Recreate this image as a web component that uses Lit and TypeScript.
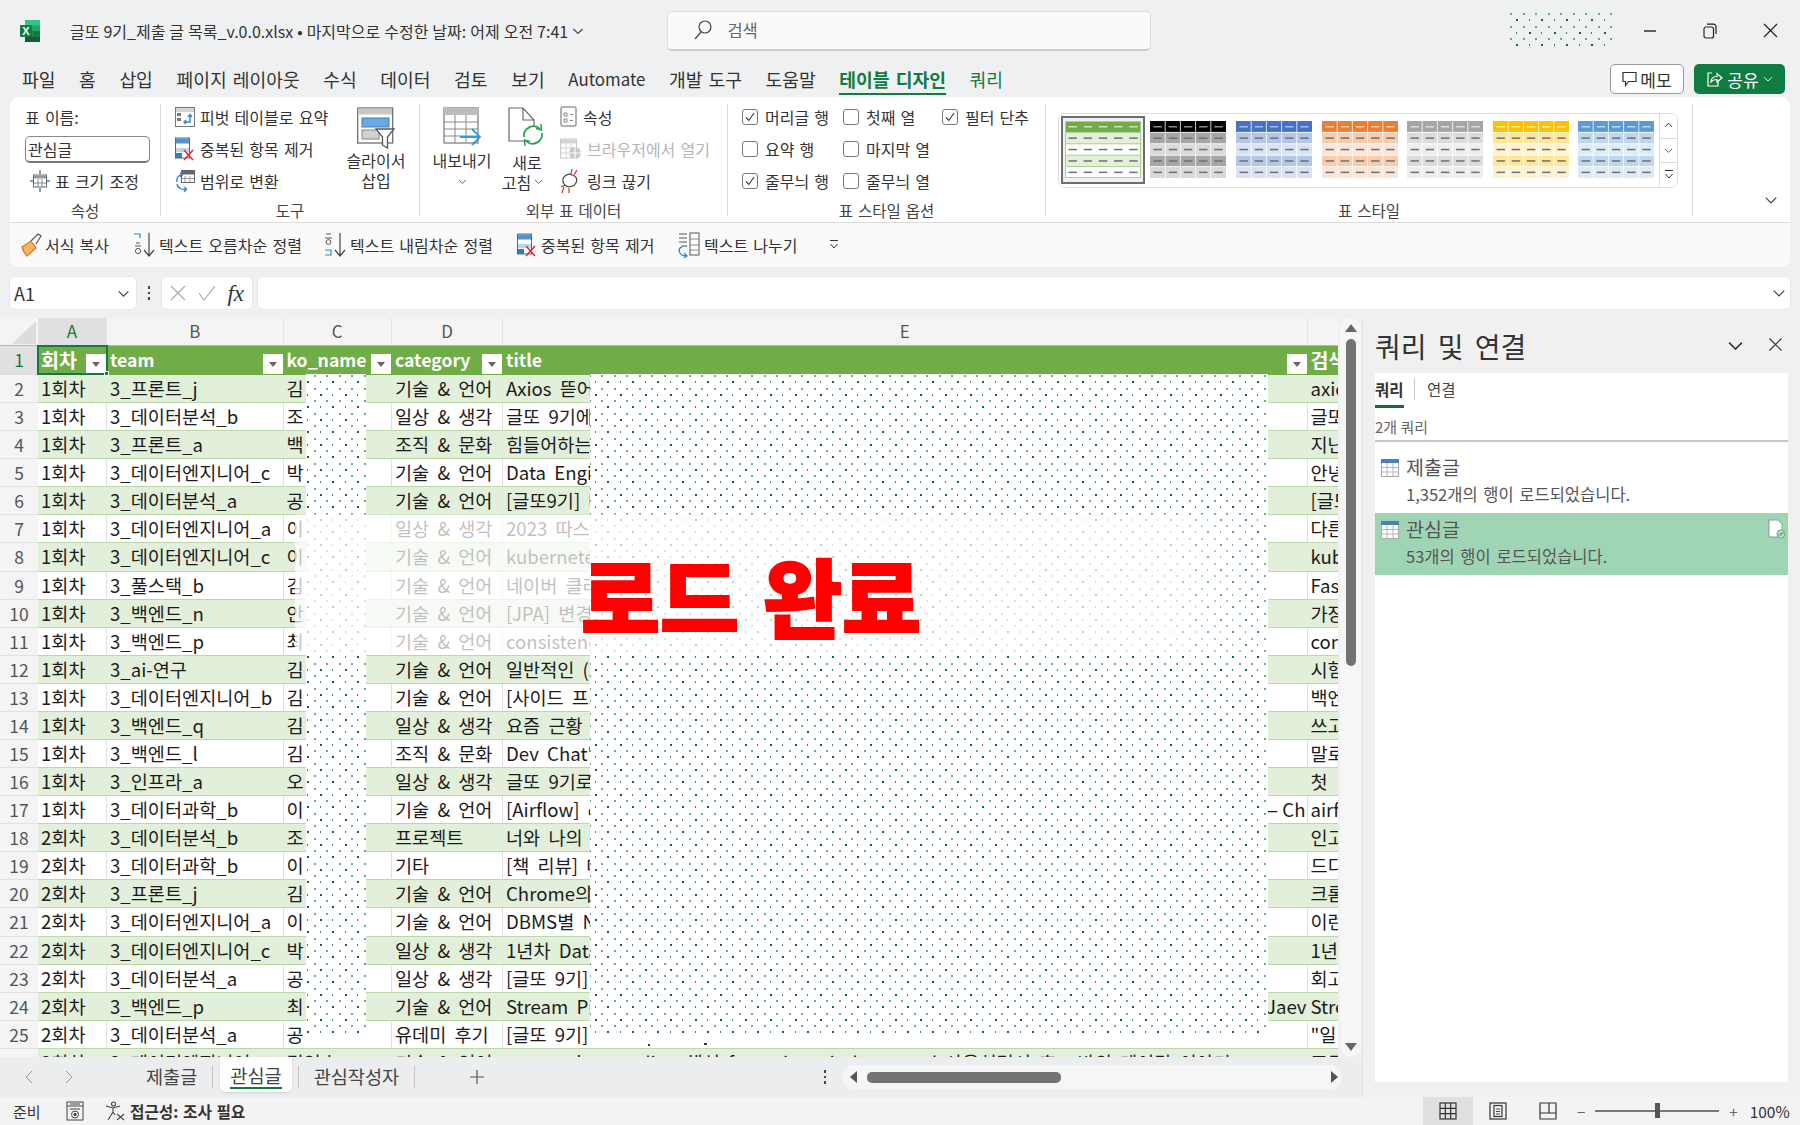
import { LitElement, html, css, svg } from "lit";
import { customElement } from "lit/decorators.js";

const ROWS: string[][] = [
  ["1회차","3_프론트_j","김","기술 & 언어","Axios 뜯어보기 이야기","axios"],
  ["1회차","3_데이터분석_b","조","일상 & 생각","글또 9기에 참여하며","글또"],
  ["1회차","3_프론트_a","백","조직 & 문화","힘들어하는 동료에게","지난"],
  ["1회차","3_데이터엔지니어_c","박","기술 & 언어","Data Engineering","안녕"],
  ["1회차","3_데이터분석_a","공","기술 & 언어","[글또9기] 데이터","[글또"],
  ["1회차","3_데이터엔지니어_a","이","일상 & 생각","2023 따스한 회고","다른"],
  ["1회차","3_데이터엔지니어_c","이","기술 & 언어","kubernetes 시작","kub"],
  ["1회차","3_풀스택_b","김","기술 & 언어","네이버 클라우드","Fast"],
  ["1회차","3_백엔드_n","안","기술 & 언어","[JPA] 변경 감지","가장"],
  ["1회차","3_백엔드_p","최","기술 & 언어","consistency 이야기","con"],
  ["1회차","3_ai-연구","김","기술 & 언어","일반적인 (그리고","시험"],
  ["1회차","3_데이터엔지니어_b","김","기술 & 언어","[사이드 프로젝트]","백엔"],
  ["1회차","3_백엔드_q","김","일상 & 생각","요즘 근황 이야기","쓰고"],
  ["1회차","3_백엔드_l","김","조직 & 문화","Dev Chat\" 후기","말로"],
  ["1회차","3_인프라_a","오","일상 & 생각","글또 9기로 시작","첫 ·"],
  ["1회차","3_데이터과학_b","이","기술 & 언어","[Airflow] dag","airfl"],
  ["2회차","3_데이터분석_b","조","프로젝트","너와 나의 이야기","인고"],
  ["2회차","3_데이터과학_b","이","기타","[책 리뷰] 데이터","드디"],
  ["2회차","3_프론트_j","김","기술 & 언어","Chrome의 렌더링","크롬"],
  ["2회차","3_데이터엔지니어_a","이","기술 & 언어","DBMS별 NULL","이런"],
  ["2회차","3_데이터엔지니어_c","박","일상 & 생각","1년차 Data 회고","1년"],
  ["2회차","3_데이터분석_a","공","일상 & 생각","[글또 9기] 회고","회고"],
  ["2회차","3_백엔드_p","최","기술 & 언어","Stream Processing","Stre"],
  ["2회차","3_데이터분석_a","공","유데미 후기","[글또 9기] 유데미","\"일"],
  ["2회차","3_데이터엔지니어_a","김영호","기술 & 언어","query plan reading 해석 for unique indexes and 사용설명서 후 : 바의 메이킹 이야기","프로"],
];

const THEMES = [
  { head:"#70ad47", a:"#e2efda", b:"#ffffff", line:"#a9d08e", dashHead:"#cfe3bf" },
  { head:"#000000", a:"#a6a6a6", b:"#d9d9d9", line:"#ffffff", dashHead:"#8a8a8a" },
  { head:"#4472c4", a:"#b4c6e7", b:"#d9e1f2", line:"#ffffff", dashHead:"#a9bde4" },
  { head:"#ed7d31", a:"#f8cbad", b:"#fce4d6", line:"#ffffff", dashHead:"#f8c9a8" },
  { head:"#a5a5a5", a:"#dbdbdb", b:"#ededed", line:"#ffffff", dashHead:"#dedede" },
  { head:"#ffc000", a:"#ffe699", b:"#fff2cc", line:"#ffffff", dashHead:"#ffe8a0" },
  { head:"#5b9bd5", a:"#bdd7ee", b:"#ddebf7", line:"#ffffff", dashHead:"#bcd6ee" },
];

function thumb(t: typeof THEMES[number], green: boolean) {
  const rowsY = [0, 11.4, 22.8, 34.2, 45.6];
  const fills = [t.head, t.a, t.b, t.a, t.b];
  return html`<svg width="76" height="57" viewBox="0 0 76 57">
    ${rowsY.map((y, i) => svg`<rect x="0" y=${y} width="76" height="11.4" fill=${fills[i]}></rect>`)}
    ${green
      ? svg`<rect x=".5" y=".5" width="75" height="56" fill="none" stroke=${t.line}></rect>
            ${rowsY.slice(1).map(y => svg`<line x1="0" x2="76" y1=${y} y2=${y} stroke=${t.line}></line>`)}`
      : [15.2, 30.4, 45.6, 60.8].map(x => svg`<line x1=${x} x2=${x} y1="0" y2="57" stroke=${t.line} stroke-width=".8"></line>`)}
    ${!green ? rowsY.slice(1).map(y => svg`<line x1="0" x2="76" y1=${y} y2=${y} stroke="#fff" stroke-width=".8"></line>`) : ""}
    ${rowsY.map((y, i) => [0,1,2,3,4].map(c => svg`<rect x=${3.5 + c * 15.2} y=${y + 5} width="8.4" height="1.5" fill=${i === 0 ? t.dashHead : "#707070"}></rect>`))}
  </svg>`;
}

const dotPattern = (id: string, tx: number, ty: number) => svg`
  <pattern id=${id} patternUnits="userSpaceOnUse" width="25" height="25" patternTransform="translate(${tx},${ty})">
    <rect x="0" y="0" width="2" height="2" fill="#6aa98a"></rect>
    <rect x="13" y="0" width="2" height="2" fill="#6aa98a"></rect>
    <rect x="6" y="6" width="2" height="2" fill="#0e6a3a"></rect>
    <rect x="19" y="6" width="1" height="2" fill="#3f8a63"></rect>
    <rect x="0" y="13" width="2" height="2" fill="#6aa98a"></rect>
    <rect x="13" y="13" width="2" height="2" fill="#6aa98a"></rect>
    <rect x="6" y="19" width="1" height="2" fill="#3f8a63"></rect>
    <rect x="19" y="19" width="2" height="2" fill="#0e6a3a"></rect>
  </pattern>`;

const I = {
  excel: html`<svg width="22" height="24" viewBox="0 0 22 24"><rect x="6" y="1" width="15" height="22" rx="1.5" fill="#21a366"></rect><rect x="6" y="1" width="15" height="5.5" fill="#33c481"></rect><rect x="13.5" y="12" width="7.5" height="5.5" fill="#107c41"></rect><rect x="6" y="17.5" width="15" height="5.5" fill="#185c37"></rect><rect x="1" y="6" width="12" height="12" rx="1" fill="#107c41"></rect><text x="7" y="15.5" text-anchor="middle" font-size="11" font-weight="700" font-family="Liberation Sans" fill="#fff">X</text></svg>`,
  search: html`<svg width="20" height="22" viewBox="0 0 20 22" fill="none" stroke="#444" stroke-width="1.2"><circle cx="12" cy="8" r="6"></circle><path d="M8 13 L2 20"></path></svg>`,
  min: html`<svg width="14" height="4" viewBox="0 0 14 4"><path d="M1 2H13" stroke="#222" stroke-width="1.4"></path></svg>`,
  restore: html`<svg width="14" height="16" viewBox="0 0 14 16" fill="none" stroke="#222" stroke-width="1.2"><rect x="1" y="4" width="9.5" height="11" rx="2"></rect><path d="M4 1.2H10.5A2.5 2.5 0 0 1 13 3.7V11"></path></svg>`,
  close: html`<svg width="15" height="15" viewBox="0 0 15 15"><path d="M1 1L14 14M14 1L1 14" stroke="#222" stroke-width="1.2"></path></svg>`,
  bubble: html`<svg width="15" height="16" viewBox="0 0 15 16" fill="none" stroke="#333" stroke-width="1.2"><path d="M1 1.5H14V10.5H6.5L3.5 14.5V10.5H1Z"></path></svg>`,
  share: html`<svg width="17" height="17" viewBox="0 0 17 17" fill="none" stroke="#fff" stroke-width="1.2"><path d="M6 2H2V15H12V10"></path><path d="M5 11C5 7 8 5.5 11 5.5V2.5L16 7L11 11V8.5C8.5 8.5 6.5 9 5 11Z"></path></svg>`,
  pivot: html`<svg width="20" height="22" viewBox="0 0 20 22"><rect x=".5" y="1.5" width="19" height="19" fill="#fff" stroke="#777"></rect><rect x="1" y="2" width="18" height="4" fill="#d5d5d5"></rect><rect x="2" y="7" width="4" height="3" fill="#777"></rect><rect x="2" y="12" width="4" height="3" fill="#777"></rect><path d="M9 16H15V9M13 11L15 8.5L17 11M11 14L9 16L11 18" fill="none" stroke="#2e86c9" stroke-width="1.4"></path></svg>`,
  dup: html`<svg width="20" height="24" viewBox="0 0 20 24"><rect x=".5" y="1" width="14" height="20" fill="#fff" stroke="#666"></rect><rect x="1" y="1.5" width="13" height="5" fill="#4f93d1"></rect><rect x="1" y="11" width="13" height="4" fill="#b9d6ef"></rect><rect x="1" y="16" width="6" height="5" fill="#2f7dc1"></rect><path d="M9 13L18 23M18 13L9 23" stroke="#e5252a" stroke-width="1.5"></path></svg>`,
  convert: html`<svg width="20" height="24" viewBox="0 0 20 24" fill="none"><rect x="6.5" y="1.5" width="13" height="12" fill="#fff" stroke="#666"></rect><rect x="7" y="2" width="12" height="3.5" fill="#666"></rect><path d="M10 7V13M15 7V13M7 9.5H19" stroke="#999"></path><path d="M2 13C1 8 4 6 7 6M5 4L7.5 6L5 8M2 15C3 20 8 21 11 20M9 18L11.5 20L9 23" stroke="#2e86c9" stroke-width="1.3"></path></svg>`,
  resize: html`<svg width="20" height="24" viewBox="0 0 20 24" fill="none"><rect x="3.5" y="6" width="13" height="12" fill="#fff" stroke="#666"></rect><rect x="4" y="6.5" width="12" height="3" fill="#999"></rect><path d="M8 10V18M12 10V18M4 14H16" stroke="#888"></path><path d="M10 1V5M10 19V23M0 12H3M17 12H20" stroke="#2e86c9" stroke-width="1.4"></path></svg>`,
  slicer: html`<svg width="38" height="42" viewBox="0 0 38 42"><rect x=".7" y="1" width="35" height="35" fill="#fff" stroke="#666" stroke-width="1.2"></rect><rect x="1" y="1.5" width="34" height="6" fill="#c8c8c8"></rect><rect x="5" y="11" width="27" height="9" fill="#6ba8e0" stroke="#3c7fbf"></rect><rect x="5" y="23" width="17" height="9" fill="#d2d2d2" stroke="#888"></rect><path d="M19 22H37L30.5 30V41L25.5 38V30Z" fill="#fff" stroke="#555" stroke-width="1.3"></path></svg>`,
  exportT: html`<svg width="40" height="42" viewBox="0 0 40 42" fill="none"><rect x="2" y="1" width="34" height="35" fill="#fff" stroke="#777" stroke-width="1.2"></rect><rect x="2" y="1" width="34" height="7" fill="#bdbdbd"></rect><path d="M2 15H36M2 22H36M2 29H36M13 8V36M24 8V36" stroke="#888"></path><path d="M18 30H38M30 22L38 30L30 38" stroke="#2e9ce0" stroke-width="1.8"></path></svg>`,
  refresh: html`<svg width="40" height="44" viewBox="0 0 40 44" fill="none"><path d="M2 1H16L27 13V34H2Z" fill="#fff" stroke="#666" stroke-width="1.2"></path><path d="M16 1V13H27" stroke="#666" stroke-width="1.2"></path><circle cx="26" cy="28" r="9.5" fill="#fff"></circle><path d="M17 30A9.5 9.5 0 0 1 33 22M35 26A9.5 9.5 0 0 1 19 34" stroke="#22a355" stroke-width="1.7"></path><path d="M29 21.5L34.5 23L34 17M23 34.5L17.5 33L18 39" stroke="#22a355" stroke-width="1.5"></path></svg>`,
  props: html`<svg width="18" height="22" viewBox="0 0 18 22" fill="none"><rect x="1" y="1" width="15" height="19" rx="1" stroke="#666" fill="#fff"></rect><path d="M4 7H7V10H4ZM4 13H7V16H4Z" stroke="#888"></path><path d="M10 8.5H13M10 14.5H13" stroke="#888"></path></svg>`,
  browser: html`<svg width="22" height="22" viewBox="0 0 22 22"><rect x=".5" y="1" width="16" height="19" fill="#fff" stroke="#c8c8c8"></rect><rect x="1" y="1.5" width="15" height="4" fill="#d4d4d4"></rect><path d="M6 6V20M11 6V20M1 10H16M1 15H16" stroke="#d4d4d4"></path><circle cx="15" cy="15" r="6" fill="#c8c8c8"></circle><path d="M9 15H21M15 9V21" stroke="#fff"></path></svg>`,
  unlink: html`<svg width="22" height="26" viewBox="0 0 22 26" fill="none"><path d="M5 8C9 5 12 7 12 7C16 8 18 11 16 15C14 19 8 20 5 17C2 14 2 10 5 8Z" stroke="#444" stroke-width="1.2" fill="#fff"></path><path d="M12 1L11 6M17 2L14 7M2 25L4 19M9 25L9 20M1 19L5 17" stroke="#e5252a" stroke-width="1.2"></path></svg>`,
  painter: html`<svg width="22" height="24" viewBox="0 0 22 24" fill="none"><path d="M2 14L11 8L16 15L7 23C5 21 3 18 2 14Z" fill="#f7b267" stroke="#d9791a" stroke-width="1.2"></path><path d="M11 8L18 1L21 3L16 11" fill="#fff" stroke="#555" stroke-width="1.2"></path></svg>`,
  sortAsc: html`<svg width="24" height="26" viewBox="0 0 24 26" fill="none"><path d="M2 2H8V6" stroke="#2e86c9" stroke-width="1.2"></path><path d="M4 11H8" stroke="#555"></path><circle cx="6" cy="19" r="2.6" stroke="#555"></circle><path d="M3 14H9" stroke="#555"></path><path d="M17 1V24M12 18L17 24L22 18" stroke="#444" stroke-width="1.2"></path></svg>`,
  sortDesc: html`<svg width="24" height="26" viewBox="0 0 24 26" fill="none"><path d="M3 2H8M2 6H9" stroke="#555"></path><circle cx="5.5" cy="10" r="2.4" stroke="#555"></circle><path d="M2 18H8V23H2" stroke="#2e86c9" stroke-width="1.2"></path><path d="M17 1V24M12 18L17 24L22 18" stroke="#444" stroke-width="1.2"></path></svg>`,
  split: html`<svg width="24" height="26" viewBox="0 0 24 26" fill="none"><path d="M2 2H10M2 6H10M2 10H10" stroke="#555"></path><rect x="13" y="1" width="9" height="22" stroke="#555" fill="#fff"></rect><path d="M13 7H22M13 13H22M13 18H22" stroke="#888"></path><path d="M10 14C3 13 1 18 3 21C4 23 7 24 10 24M7 21L10 24L7 26" stroke="#2e86c9" stroke-width="1.3"></path></svg>`,
  more: html`<svg width="12" height="12" viewBox="0 0 12 12" fill="none" stroke="#333"><path d="M2 1.5H10M2.5 5L6 9L9.5 5"></path></svg>`,
  tbl: html`<svg width="18" height="18" viewBox="0 0 18 18"><rect x=".5" y=".5" width="17" height="17" fill="#fff" stroke="#a8a8a8"></rect><rect x="0" y="0" width="18" height="4" fill="#4a7fc1"></rect><path d="M6 4V18M12 4V18M0 8.5H18M0 13H18" stroke="#b5b5b5"></path></svg>`,
  fileRef: html`<svg width="18" height="20" viewBox="0 0 18 20"><path d="M1 1H10L14 5V18H1Z" fill="#fff" stroke="#8a9a90"></path><circle cx="13" cy="15" r="4.5" fill="#7ab795"></circle><path d="M10.5 15A2.5 2.5 0 0 1 15 13.5M15.5 15A2.5 2.5 0 0 1 11 16.5" stroke="#fff" fill="none"></path></svg>`,
  macro: html`<svg width="18" height="20" viewBox="0 0 18 20" fill="none" stroke="#444"><rect x="1" y="1" width="16" height="18"></rect><path d="M1 5H17M4 8H14M4 3H14"></path><circle cx="9" cy="13.5" r="3.5"></circle><circle cx="9" cy="13.5" r="1.2" fill="#444"></circle></svg>`,
  access: html`<svg width="20" height="20" viewBox="0 0 20 20" fill="none" stroke="#444" stroke-width="1.1"><circle cx="8.5" cy="3" r="2"></circle><path d="M1 5L8 7L15 5M8 7V11L3 19M8 11L10 14"></path><path d="M12 13L19 19M19 13L12 19" stroke="#444"></path></svg>`,
  vNormal: html`<svg width="18" height="18" viewBox="0 0 18 18" fill="none" stroke="#333" stroke-width="1.2"><rect x="1" y="1" width="16" height="16"></rect><path d="M6.3 1V17M11.7 1V17M1 6.3H17M1 11.7H17"></path></svg>`,
  vPage: html`<svg width="18" height="18" viewBox="0 0 18 18" fill="none" stroke="#333" stroke-width="1.2"><rect x="1" y="1" width="16" height="16"></rect><rect x="5" y="3.5" width="8" height="11"></rect><path d="M7 7H11M7 9.5H11M7 12H11" stroke-width=".9"></path></svg>`,
  vBreak: html`<svg width="18" height="18" viewBox="0 0 18 18" fill="none" stroke="#333" stroke-width="1.2"><path d="M1 1H17V17H1ZM10 1V11H17M10 11H1" ></path></svg>`,
};

const chev = (w = 12, color = "#444") => html`<svg width=${w} height=${w} viewBox="0 0 12 12" fill="none" stroke=${color} stroke-width="1.1"><path d="M1.5 4L6 8.5L10.5 4"></path></svg>`;

@customElement("app-root")
export class AppRoot extends LitElement {
  static styles = css`
    :host { display: block; width: 1800px; height: 1125px; overflow: hidden; background: #eef0f1; color: #222;
      font-family: "Noto Sans CJK KR", "Liberation Sans", sans-serif; font-size: 16px; }
    .app { display: flex; flex-direction: column; height: 1125px; }
    svg { display: block; flex: none; }

    /* title bar */
    .title { height: 61px; display: flex; align-items: center; flex: none; }
    .logo { margin-left: 19px; width: 51px; }
    .ttext { width: 598px; display: flex; align-items: center; gap: 4px; font-size: 16px; word-spacing: .4px; color: #333; white-space: nowrap; }
    .search { width: 484px; height: 40px; background: #fafafa; border: 1px solid #dedede; border-bottom: 2px solid #ccc; border-radius: 5px;
      box-sizing: border-box; display: flex; align-items: center; gap: 14px; padding-left: 25px; color: #666; font-size: 16.5px; }
    .dotsT { margin-left: 356px; }
    .wc { display: flex; margin-left: 5px; }
    .wc div { width: 60px; display: flex; justify-content: center; align-items: center; height: 40px; }

    /* ribbon tabs */
    .tabs { height: 36px; display: flex; align-items: center; flex: none; padding-left: 22px; gap: 23.6px; font-size: 18.2px; word-spacing: 2px; color: #333; white-space: nowrap; }
    .tab { height: 36px; line-height: 36px; position: relative; }
    .tab.lat { font-size: 16.9px; }
    .tab.on { color: #107c41; font-weight: 700; }
    .tab.on::after { content: ""; position: absolute; left: 0; right: 0; bottom: 2px; height: 2.5px; background: #107c41; }
    .tab.q { color: #107c41; }
    .tab.spacer { flex: 1; }
    .memo { width: 74px; height: 30px; box-sizing: border-box; border: 1px solid #999; border-radius: 5px; background: #fff; display: flex; align-items: center; justify-content: center; gap: 3px; font-size: 17px; margin-right: -13.6px; }
    .sharebtn { width: 91px; height: 30px; box-sizing: border-box; border-radius: 5px; background: #107c41; color: #fff; display: flex; align-items: center; justify-content: center; gap: 4px; font-size: 17px; margin-right: 15px; }

    /* ribbon */
    .ribbon { margin: 0 10px; width: 1780px; height: 170px; flex: none; background: #fff; border-radius: 9px; overflow: hidden; box-sizing: border-box; }
    .rtop { display: flex; height: 126px; padding-top: 4px; box-sizing: border-box; border-bottom: 1.5px solid #dcdcdc; font-size: 16px; word-spacing: 1.6px; color: #333; }
    .vsep { width: 1px; height: 112px; margin-top: 3px; background: #d9d9d9; flex: none; }
    .group { display: flex; flex-direction: column; flex: none; }
    .gbody { height: 97px; display: flex; }
    .glabel { height: 24px; line-height: 24px; text-align: center; font-size: 15.5px; color: #444; }
    .g1 { width: 150px; } .g2 { width: 258px; } .g3 { width: 307px; } .g4 { width: 317px; } .g5 { width: 646px; } .g6 { flex: 1; position: relative; }
    .col { display: flex; flex-direction: column; }
    .r { height: 32px; display: flex; align-items: center; gap: 5px; white-space: nowrap; }
    .g1 .col { padding-left: 15px; }
    .namein { width: 125px; height: 27px; box-sizing: border-box; border: 1px solid #888; border-bottom: 2px solid #777; border-radius: 5px; padding-left: 2px; font-size: 16px; line-height: 24px; }
    .pad5 { padding-left: 5px; }
    .g2col { width: 180px; padding-left: 14px; box-sizing: border-box; }
    .big { display: flex; flex-direction: column; align-items: center; padding-top: 6px; line-height: 20px; white-space: nowrap; box-sizing: border-box; }
    .big svg { margin-bottom: 1px; }
    .bslicer { width: 70px; } .bexport { width: 84px; } .brefresh { width: 46px; }
    .big .cv { display: flex; align-items: center; gap: 3px; margin-left: -9px; }
    .cvo { margin-top: 7px; }
    .g3col { padding-left: 10px; }
    .dis { color: #b5b5b5; }
    .g4grid { display: grid; grid-template-columns: 101px 99px 1fr; grid-auto-rows: 32px; padding-left: 14px; }
    .chk { display: flex; align-items: center; gap: 7px; white-space: nowrap; }
    .box { width: 16px; height: 16px; box-sizing: border-box; border: 1px solid #777; border-radius: 3px; display: flex; align-items: center; justify-content: center; }
    .gallery { margin: 12px 0 0 12px; width: 620px; height: 75px; box-sizing: border-box; border: 1.5px solid #dedede; border-radius: 7px; display: flex; padding-left: 1px; }
    .th { width: 85.6px; height: 71px; display: flex; align-items: center; justify-content: center; box-sizing: border-box; flex: none; }
    .th.sel { width: 84px; height: 68px; margin: 1.5px .8px 0; border: 2px solid #6e6e6e; background: #f0f0f0; }
    .spin { margin-left: auto; width: 19px; display: flex; flex-direction: column; border-left: 1.5px solid #dedede; }
    .spin div { flex: 1; display: flex; align-items: center; justify-content: center; border-bottom: 1.5px solid #dedede; }
    .spin div:last-child { border-bottom: 0; }
    .ribchev { position: absolute; right: 12px; top: 92px; }
    .qbar { height: 44px; background: #fafafa; display: flex; align-items: center; font-size: 16px; word-spacing: 1.6px; color: #333; padding-left: 10px; white-space: nowrap; }
    .qi { display: flex; align-items: center; gap: 3px; }
    .qa { width: 112px; } .qb { width: 191px; } .qc { width: 194px; } .qd { width: 160px; gap: 4px; } .qe { width: 151px; }

    /* formula */
    .formula { height: 32px; margin: 10px 10px 9px; display: flex; flex: none; align-items: stretch; }
    .fbox { background: #fff; border-radius: 5px; box-shadow: 0 0 0 1px #e6e6e6; display: flex; align-items: center; box-sizing: border-box; }
    .namebox { width: 126px; padding: 0 6px 0 4px; justify-content: space-between; font-size: 18px; color: #333; }
    .vdots { width: 26px; display: flex; flex-direction: column; align-items: center; justify-content: center; gap: 3px; }
    .vdots i { width: 2.5px; height: 2.5px; background: #444; display: block; }
    .fxb { width: 90px; justify-content: space-around; padding: 0 2px; }
    .fx { font-family: "Liberation Serif", serif; font-style: italic; font-size: 23px; color: #333; line-height: 1; }
    .finput { flex: 1; margin-left: 6px; justify-content: flex-end; padding-right: 4px; }

    /* main */
    .main { flex: 1; display: flex; min-height: 0; }
    .left { width: 1362px; display: flex; flex-direction: column; flex: none; }
    .gridrow { height: 739px; display: flex; flex: none; }
    .sheet { width: 1338px; height: 739px; overflow: hidden; position: relative; background: #fff; flex: none; }
    .vscroll { margin-left: 2px; width: 21px; height: 739px; background: #f6f6f6; border-radius: 11px; display: flex; flex-direction: column; align-items: center; padding-top: 6px; box-sizing: border-box; flex: none; }
    .vthumb { width: 10px; height: 327px; background: #737373; border-radius: 5px; margin-top: 7px; }
    .vspace { flex: 1; }
    .vdown { margin-bottom: 6px; }
    .rw { display: grid; grid-template-columns: 38px 69px 176.5px 108.5px 111px 804.5px 31px; height: 28.08px; }
    .hrow { height: 27px; background: #f4f4f4; border-bottom: 1.5px solid #b7b7b7; box-sizing: content-box; }
    .hc { text-align: center; line-height: 25px; font-size: 17px; color: #555; border-right: 1px solid #e4e4e4; }
    .hc.on { background: #e0e0e0; color: #107c41; }
    .corner { position: relative; background: #f4f4f4; border: 0; }
    .corner svg { position: absolute; left: 12px; top: 3px; }
    .hdr { height: 29px; }
    .rn { background: #f4f4f4; border-bottom: 1px solid #e2e2e2; text-align: center; font-size: 17.5px; line-height: 27px; color: #555; }
    .rn.on { background: #e0e0e0; color: #107c41; }
    .c { padding-left: 3px; font-size: 18.6px; word-spacing: 4px; line-height: 26px; color: #1c1c1c; overflow: hidden; white-space: nowrap; box-sizing: border-box; border-bottom: 1.2px solid #bcd8a8; border-right: 1px solid #e0e0e0; min-width: 0; }
    .c.g { background: #e2efda; border-right: 0; }
    .h { background: #70ad47; color: #fff; font-weight: 700; font-size: 17.6px; line-height: 27px; padding-left: 3px; display: flex; justify-content: space-between; align-items: flex-end; border: 0; position: relative; white-space: nowrap; overflow: hidden; }
    .h.k { font-size: 19.5px; }
    .h span { align-self: flex-start; }
    .fb { width: 20px; height: 20px; background: #fff; flex: none; margin: 0 1px 1px 0; display: flex; align-items: center; justify-content: center; }
    .tri { width: 0; height: 0; border: 4px solid transparent; border-top: 5px solid #666; margin-top: 5px; }
    .e2 { display: flex; justify-content: space-between; }
    .tail { padding-right: 1px; word-spacing: 0; }
    .cellsel { position: absolute; left: 37px; top: 27px; width: 71px; height: 30px; box-sizing: border-box; border: 2px solid #107c41; pointer-events: none; }
    .cellsel::after { content: ""; position: absolute; right: -3px; bottom: -3px; width: 5px; height: 5px; background: #107c41; border: 1px solid #fff; box-sizing: border-box; }
    .ov { position: absolute; left: 0; top: 0; }
    .done { position: absolute; left: 581px; top: 217px; font-size: 86px; line-height: 120px; font-weight: 900; color: #ff0000; white-space: nowrap; -webkit-text-stroke: 2px #ff0000; word-spacing: 4px; }

    /* sheet tabs */
    .stabs { height: 40px; display: flex; align-items: center; flex: none; font-size: 18.6px; color: #444; background: #ecedee; }
    .nav { width: 131px; flex: none; display: flex; padding-left: 24px; box-sizing: border-box; gap: 30px; }
    .st { height: 40px; line-height: 38px; white-space: nowrap; position: relative; }
    .st.s1 { padding: 0 15px; }
    .st.s3 { padding: 0 15px 0 15px; }
    .st.act { background: #fff; height: 35px; align-self: flex-start; padding: 0 10px; margin: 0 6px 0 7px; border-radius: 0 0 5px 5px; line-height: 35px; box-shadow: 0 1px 2px #d0d0d0; }
    .st.act::after { content: ""; position: absolute; left: 10px; right: 10px; bottom: 3px; height: 2.5px; background: #107c41; }
    .ssep { width: 1px; height: 22px; background: #c4c4c4; flex: none; }
    .plus { margin-left: 54px; flex: none; }
    .hdots { margin-left: 331px; width: 18px; display: flex; flex-direction: column; align-items: center; gap: 3px; flex: none; }
    .hdots i { width: 2.5px; height: 2.5px; background: #444; display: block; }
    .hscroll { width: 500px; height: 24px; margin-left: 8px; background: #f6f6f6; border-radius: 12px; display: flex; align-items: center; padding: 0 4px 0 8px; box-sizing: border-box; flex: none; }
    .hthumb { width: 194px; height: 11px; background: #737373; border-radius: 5px; margin-left: 9.6px; }
    .hsp { flex: 1; }

    /* panel */
    .panel { width: 438px; border-left: 1.5px solid #e2e2e2; box-sizing: border-box; background: #f0f0f0; display: flex; flex-direction: column; padding: 0 12px 15px 12px; }
    .ptitle { height: 55px; display: flex; align-items: center; flex: none; font-size: 28px; color: #333; word-spacing: 5px; }
    .ptitle .t { flex: 1; }
    .pico { display: flex; gap: 24px; padding-right: 0; margin-right: 5px; }
    .pcard { flex: 1; background: #fff; display: flex; flex-direction: column; }
    .ptabs { height: 32px; display: flex; align-items: center; font-size: 15.5px; color: #444; flex: none; }
    .ptab { position: relative; line-height: 32px; }
    .ptab.on { font-weight: 700; color: #333; }
    .ptab.on::after { content: ""; position: absolute; left: 0; right: 0; bottom: -3px; height: 3px; background: #1a6b3c; }
    .psep { width: 1.5px; height: 22px; background: #c8c8c8; margin: 0 12px 0 10px; }
    .pcount { height: 26px; margin-top: 9px; border-bottom: 2px solid #c6c6c6; font-size: 15px; color: #666; line-height: 26px; flex: none; }
    .qitem { height: 62px; display: flex; position: relative; padding: 2px 0 0 6px; box-sizing: border-box; flex: none; }
    .qitem .txt { margin-left: 7px; }
    .qname { font-size: 19.5px; color: #555; line-height: 28px; }
    .qsub { font-size: 16.5px; color: #555; line-height: 26px; word-spacing: 2px; }
    .qitem.on { background: #9fd5b5; }
    .qitem.first { margin-top: 9px; }
    .qicon { margin-top: 6px; }
    .qfile { position: absolute; right: 2px; top: 6px; }

    /* status */
    .status { height: 28px; flex: none; background: #f3f3f3; display: flex; align-items: center; font-size: 15px; color: #333; }
    .stxt { margin-left: 13px; width: 53px; }
    .smac { width: 39px; }
    .sacc { display: flex; align-items: center; gap: 5px; font-weight: 700; width: 1318px; font-size: 15.7px; word-spacing: 1px; }
    .vb { width: 50px; height: 28px; display: flex; align-items: center; justify-content: center; flex: none; }
    .vb.on { background: #e0e0e0; }
    .zoomb { display: flex; align-items: center; margin-left: 4px; color: #666; }
    .sl { width: 124px; height: 2px; background: #777; margin: 0 10px; position: relative; }
    .sl::after { content: ""; position: absolute; left: 60px; top: -7px; width: 5px; height: 15px; background: #555; }
    .pct { margin-left: 12px; font-size: 15.5px; color: #333; }
  `;

  private topGroups() {
    const chk = (on: boolean, t: string) => html`<div class="chk"><span class="box">${on ? html`<svg width="10" height="10" viewBox="0 0 10 10" fill="none" stroke="#333" stroke-width="1.1"><path d="M1 5.5L3.8 8.5L9 1"></path></svg>` : ""}</span>${t}</div>`;
    return html`
      <div class="group g1">
        <div class="gbody"><div class="col">
          <div class="r">표 이름:</div>
          <div class="r"><div class="namein">관심글</div></div>
          <div class="r pad5">${I.resize}표 크기 조정</div>
        </div></div>
        <div class="glabel">속성</div>
      </div>
      <div class="vsep"></div>
      <div class="group g2">
        <div class="gbody">
          <div class="col g2col">
            <div class="r">${I.pivot}피벗 테이블로 요약</div>
            <div class="r">${I.dup}중복된 항목 제거</div>
            <div class="r">${I.convert}범위로 변환</div>
          </div>
          <div class="big bslicer">${I.slicer}<div>슬라이서</div><div>삽입</div></div>
        </div>
        <div class="glabel">도구</div>
      </div>
      <div class="vsep"></div>
      <div class="group g3">
        <div class="gbody">
          <div class="big bexport">${I.exportT}<div>내보내기</div><div class="cvo">${chev(9)}</div></div>
          <div class="big brefresh">${I.refresh}<div>새로</div><div class="cv">고침 ${chev(9)}</div></div>
          <div class="col g3col">
            <div class="r">${I.props}속성</div>
            <div class="r dis">${I.browser}브라우저에서 열기</div>
            <div class="r">${I.unlink}링크 끊기</div>
          </div>
        </div>
        <div class="glabel">외부 표 데이터</div>
      </div>
      <div class="vsep"></div>
      <div class="group g4">
        <div class="gbody"><div class="g4grid">
          ${chk(true,"머리글 행")}${chk(false,"첫째 열")}${chk(true,"필터 단추")}
          ${chk(false,"요약 행")}${chk(false,"마지막 열")}<span></span>
          ${chk(true,"줄무늬 행")}${chk(false,"줄무늬 열")}<span></span>
        </div></div>
        <div class="glabel">표 스타일 옵션</div>
      </div>
      <div class="vsep"></div>
      <div class="group g5">
        <div class="gbody"><div class="gallery">
          ${THEMES.map((t, i) => html`<div class="th ${i === 0 ? "sel" : ""}">${thumb(t, i === 0)}</div>`)}
          <div class="spin">
            <div><svg width="9" height="9" viewBox="0 0 9 9" fill="none" stroke="#444"><path d="M1 6L4.5 2L8 6"></path></svg></div>
            <div>${chev(9)}</div>
            <div>${I.more}</div>
          </div>
        </div></div>
        <div class="glabel">표 스타일</div>
      </div>
      <div class="vsep"></div>
      <div class="group g6"><div class="ribchev">${chev(14)}</div></div>
    `;
  }

  private sheet() {
    const heads = ["회차","team","ko_name","category","title","검색"];
    const colLetters = ["A","B","C","D","E",""];
    return html`
      <div class="sheet">
        <div class="rw hrow">
          <div class="corner"><svg width="24" height="23" viewBox="0 0 24 23"><path d="M24 0V23H0Z" fill="#dcdcdc"></path></svg></div>
          ${colLetters.map((l, i) => html`<div class="hc ${i === 0 ? "on" : ""}">${l}</div>`)}
        </div>
        <div class="rw hdr">
          <div class="rn on">1</div>
          ${heads.map((h, i) => html`<div class="h ${i === 0 || i === 5 ? "k" : ""}"><span>${h}</span>${i < 5 ? html`<div class="fb"><div class="tri"></div></div>` : ""}</div>`)}
        </div>
        ${ROWS.map((r, i) => {
          const g = i % 2 === 0 ? "g" : "";
          return html`<div class="rw">
            <div class="rn">${i + 2}</div>
            ${r.map((v, j) => j === 4 && (i === 15 || i === 22)
              ? html`<div class="c ${g} e2"><span>${v}</span><span class="tail">${i === 15 ? "— Ch" : "Jaev"}</span></div>`
              : html`<div class="c ${g}">${v}</div>`)}
          </div>`;
        })}
        <div class="cellsel"></div>
        <svg class="ov" width="1338" height="739" viewBox="0 0 1338 739">
          <defs>
            ${dotPattern("dp", 1, 7)}
            <linearGradient id="wash" x1="0" x2="1" y1="0" y2="0">
              <stop offset="0" stop-color="#fff" stop-opacity=".72"></stop>
              <stop offset=".9" stop-color="#fff" stop-opacity=".72"></stop>
              <stop offset="1" stop-color="#fff" stop-opacity=".1"></stop>
            </linearGradient>
          </defs>
          <rect x="306" y="56" width="60" height="664" fill="#fff"></rect>
          <rect x="590" y="56" width="678" height="673" fill="#fff"></rect>
          <rect x="306" y="56" width="60" height="664" fill="url(#dp)"></rect>
          <rect x="590" y="56" width="678" height="660" fill="url(#dp)"></rect>
          <rect x="295" y="196.5" width="973" height="140.4" fill="url(#wash)"></rect>
          <rect x="648" y="726" width="2" height="2" fill="#333"></rect>
          <rect x="704" y="725" width="3" height="2" fill="#333"></rect>
        </svg>
        <div class="done">로드 완료</div>
      </div>`;
  }

  render() {
    const tabs = ["파일","홈","삽입","페이지 레이아웃","수식","데이터","검토","보기"];
    const tabs2 = ["개발 도구","도움말"];
    return html`<div class="app">
      <div class="title">
        <div class="logo">${I.excel}</div>
        <div class="ttext">글또 9기_제출 글 목록_v.0.0.xlsx • 마지막으로 수정한 날짜: 어제 오전 7:41 ${chev(12)}</div>
        <div class="search">${I.search}<span>검색</span></div>
        <svg class="dotsT" width="108" height="40" viewBox="0 0 108 40"><defs>${dotPattern("dp2", 3, 2)}</defs><rect width="108" height="40" fill="url(#dp2)"></rect></svg>
        <div class="wc"><div>${I.min}</div><div>${I.restore}</div><div>${I.close}</div></div>
      </div>
      <div class="tabs">
        ${tabs.map(t => html`<div class="tab">${t}</div>`)}
        <div class="tab lat">Automate</div>
        ${tabs2.map(t => html`<div class="tab">${t}</div>`)}
        <div class="tab on">테이블 디자인</div>
        <div class="tab q">쿼리</div>
        <div class="tab spacer"></div>
        <div class="memo">${I.bubble}메모</div>
        <div class="sharebtn">${I.share}공유 ${chev(10, "#fff")}</div>
      </div>
      <div class="ribbon">
        <div class="rtop">${this.topGroups()}</div>
        <div class="qbar">
          <div class="qi qa">${I.painter}서식 복사</div>
          <div class="qi qb">${I.sortAsc}텍스트 오름차순 정렬</div>
          <div class="qi qc">${I.sortDesc}텍스트 내림차순 정렬</div>
          <div class="qi qd">${I.dup}중복된 항목 제거</div>
          <div class="qi qe">${I.split}텍스트 나누기</div>
          ${I.more}
        </div>
      </div>
      <div class="formula">
        <div class="fbox namebox">A1 ${chev(13)}</div>
        <div class="vdots"><i></i><i></i><i></i></div>
        <div class="fbox fxb">
          <svg width="16" height="16" viewBox="0 0 16 16"><path d="M1 1L15 15M15 1L1 15" stroke="#aaa" stroke-width="1.2"></path></svg>
          <svg width="18" height="16" viewBox="0 0 18 16" fill="none"><path d="M1 8L6 15L17 1" stroke="#aaa" stroke-width="1.2"></path></svg>
          <span class="fx">fx</span>
        </div>
        <div class="fbox finput">${chev(14)}</div>
      </div>
      <div class="main">
        <div class="left">
          <div class="gridrow">
            ${this.sheet()}
            <div class="vscroll">
              <svg width="12" height="8" viewBox="0 0 12 8"><path d="M6 0L12 8H0Z" fill="#666"></path></svg>
              <div class="vthumb"></div>
              <div class="vspace"></div>
              <svg class="vdown" width="12" height="8" viewBox="0 0 12 8"><path d="M6 8L12 0H0Z" fill="#666"></path></svg>
            </div>
          </div>
          <div class="stabs">
            <div class="nav">
              <svg width="10" height="14" viewBox="0 0 10 14" fill="none" stroke="#999"><path d="M8 1L2 7L8 13"></path></svg>
              <svg width="10" height="14" viewBox="0 0 10 14" fill="none" stroke="#999"><path d="M2 1L8 7L2 13"></path></svg>
            </div>
            <div class="st s1">제출글</div><div class="ssep"></div>
            <div class="st act">관심글</div><div class="ssep"></div>
            <div class="st s3">관심작성자</div><div class="ssep"></div>
            <svg class="plus" width="16" height="16" viewBox="0 0 16 16"><path d="M8 1V15M1 8H15" stroke="#555" stroke-width="1.2"></path></svg>
            <div class="hdots"><i></i><i></i><i></i></div>
            <div class="hscroll">
              <svg width="7" height="12" viewBox="0 0 7 12"><path d="M0 6L7 0V12Z" fill="#555"></path></svg>
              <div class="hthumb"></div>
              <div class="hsp"></div>
              <svg width="7" height="12" viewBox="0 0 7 12"><path d="M7 6L0 0V12Z" fill="#555"></path></svg>
            </div>
          </div>
        </div>
        <div class="panel">
          <div class="ptitle"><span class="t">쿼리 및 연결</span>
            <div class="pico">${chev(17, "#333")}<svg width="15" height="15" viewBox="0 0 15 15"><path d="M1.5 1.5L13.5 13.5M13.5 1.5L1.5 13.5" stroke="#333" stroke-width="1.2"></path></svg></div>
          </div>
          <div class="pcard">
            <div class="ptabs"><div class="ptab on">쿼리</div><div class="psep"></div><div class="ptab">연결</div></div>
            <div class="pcount">2개 쿼리</div>
            <div class="qitem first"><div class="qicon">${I.tbl}</div><div class="txt"><div class="qname">제출글</div><div class="qsub">1,352개의 행이 로드되었습니다.</div></div></div>
            <div class="qitem on"><div class="qicon">${I.tbl}</div><div class="txt"><div class="qname">관심글</div><div class="qsub">53개의 행이 로드되었습니다.</div></div><div class="qfile">${I.fileRef}</div></div>
          </div>
        </div>
      </div>
      <div class="status">
        <div class="stxt">준비</div>
        <div class="smac">${I.macro}</div>
        <div class="sacc">${I.access}접근성: 조사 필요</div>
        <div class="vb on">${I.vNormal}</div>
        <div class="vb">${I.vPage}</div>
        <div class="vb">${I.vBreak}</div>
        <div class="zoomb">−<div class="sl"></div>+</div>
        <div class="pct">100%</div>
      </div>
    </div>`;
  }
}
